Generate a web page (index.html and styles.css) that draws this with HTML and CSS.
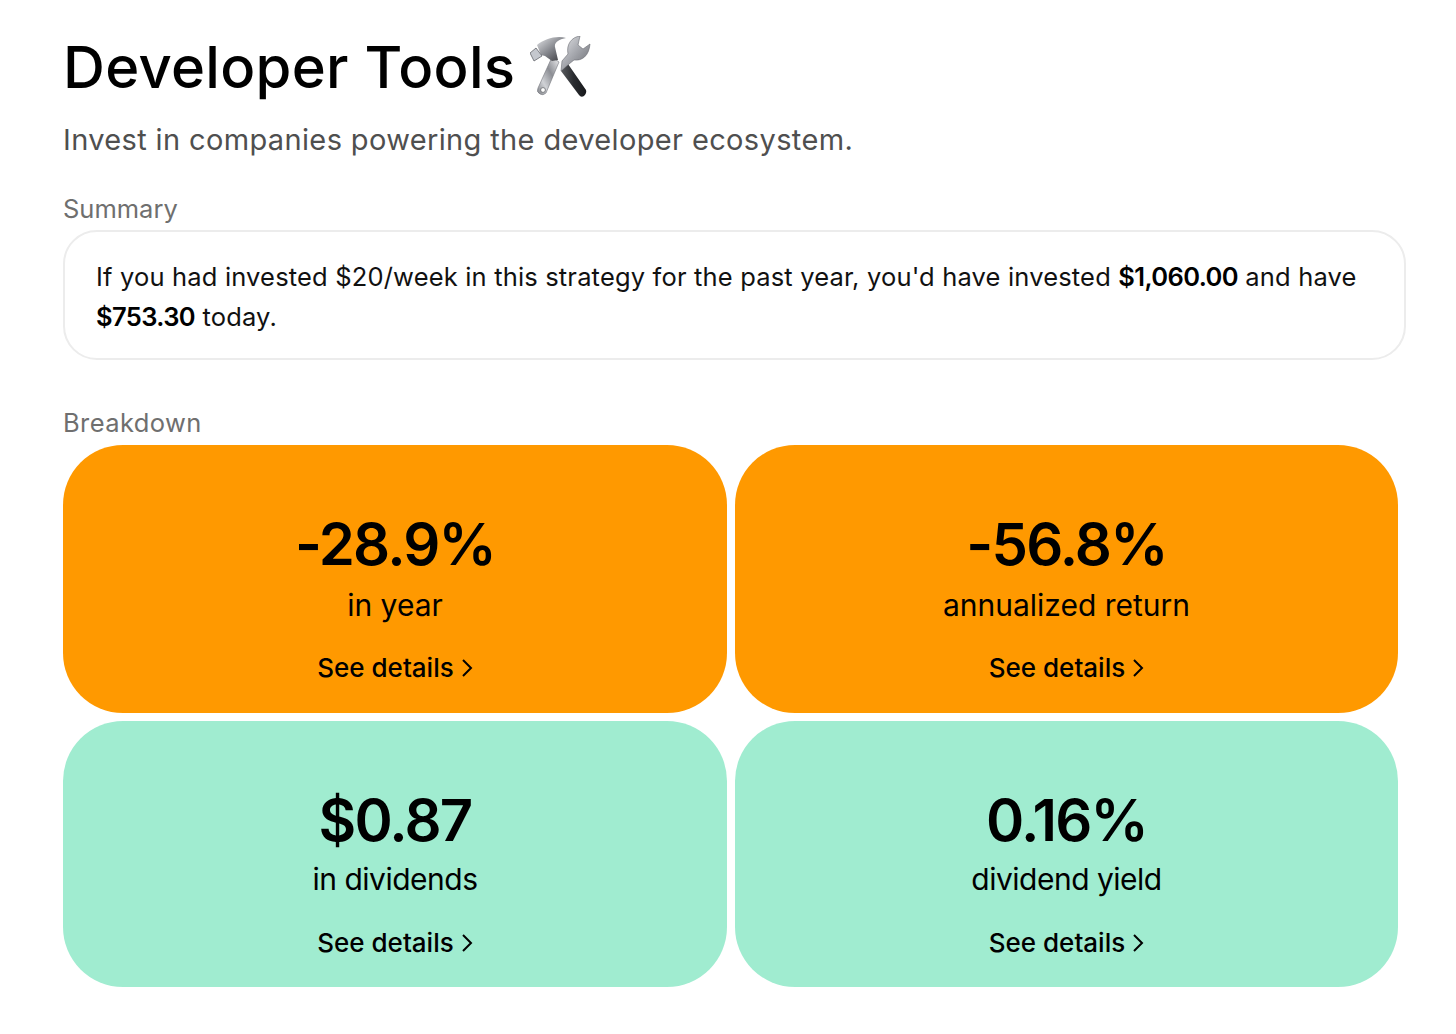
FILE: index.html
```html
<!DOCTYPE html>
<html lang="en">
<head>
<meta charset="utf-8">
<title>Developer Tools</title>
<link rel="stylesheet" href="styles.css">
</head>
<body>
<main class="page">
  <h1 class="title">Developer Tools
    <svg class="tools" viewBox="-1 0 62 62" aria-hidden="true">
      <defs>
        <linearGradient id="steel" x1="0" y1="0" x2="1" y2="1">
          <stop offset="0" stop-color="#e4e5e8"/><stop offset=".45" stop-color="#a9abb1"/><stop offset="1" stop-color="#66686e"/>
        </linearGradient>
        <linearGradient id="shaft" x1="1" y1="0" x2="0" y2="1">
          <stop offset="0" stop-color="#f2f2f3"/><stop offset=".4" stop-color="#8c8e94"/><stop offset=".7" stop-color="#d0d2d6"/><stop offset="1" stop-color="#7d7f85"/>
        </linearGradient>
        <linearGradient id="head" x1="0" y1="0" x2="1" y2="1">
          <stop offset="0" stop-color="#e2e3e6"/><stop offset=".5" stop-color="#85878d"/><stop offset="1" stop-color="#2f3034"/>
        </linearGradient>
        <linearGradient id="grip" x1="0" y1="0" x2="1" y2="0">
          <stop offset="0" stop-color="#5a5c60"/><stop offset=".5" stop-color="#2a2c30"/><stop offset="1" stop-color="#17181b"/>
        </linearGradient>
      </defs>
      <path d="M30 35 L37 28 L55 54 Q56 57 53 60 Q50 62 48 59 Z" fill="url(#grip)"/>
      <path d="M30 35 L38 28 L43 24 C51 25 58 20 59 8 L52 13 L47 9 L49 0 C41 1 35 8 37 18 L31 25 Z" fill="url(#steel)" stroke="#6a6c72" stroke-width=".6"/>
      <path d="M21 21 L28 26 L15 57 Q12 60 9 58 Q5 56 7 52 Z" fill="url(#shaft)" stroke="#74767c" stroke-width=".6"/>
      <circle cx="12" cy="54" r="2.4" fill="#fff" stroke="#55575c" stroke-width=".7"/>
      <path d="M6 9 C13 3 26 -1 35 2 C29 3 23 6 24 11 L27 24 L21 25 L14 20 L10 19 Z" fill="url(#head)"/>
      <path d="M-1 17 L5 12 L11 20 L3 25 Z" fill="#c5c8ce" stroke="#54565c" stroke-width=".7"/>
    </svg>
  </h1>
  <p class="subtitle">Invest in companies powering the developer ecosystem.</p>

  <h2 class="label label-summary">Summary</h2>
  <p class="summary">If you had invested $20/week in this strategy for the past year, you'd have invested <b>$1,060.00</b> and have <b>$753.30</b> today.</p>

  <h2 class="label label-breakdown">Breakdown</h2>
  <section class="grid">
    <article class="card orange">
      <div class="value">-28.9%</div>
      <div class="caption">in year</div>
      <a class="details">See details <svg class="chev" viewBox="0 0 12 20"><path d="M2 2l8 8-8 8"/></svg></a>
    </article>
    <article class="card orange">
      <div class="value">-56.8%</div>
      <div class="caption">annualized return</div>
      <a class="details">See details <svg class="chev" viewBox="0 0 12 20"><path d="M2 2l8 8-8 8"/></svg></a>
    </article>
    <article class="card mint">
      <div class="value">$0.87</div>
      <div class="caption">in dividends</div>
      <a class="details">See details <svg class="chev" viewBox="0 0 12 20"><path d="M2 2l8 8-8 8"/></svg></a>
    </article>
    <article class="card mint">
      <div class="value">0.16%</div>
      <div class="caption">dividend yield</div>
      <a class="details">See details <svg class="chev" viewBox="0 0 12 20"><path d="M2 2l8 8-8 8"/></svg></a>
    </article>
  </section>
</main>
</body>
</html>
```
FILE: styles.css
```css
* { box-sizing: border-box; }
html, body { margin: 0; background: #fff; }
body { font-family: Inter, "Noto Sans", "Liberation Sans", sans-serif; color: #000; }
.page { padding: 29px 50px 0 63px; width: 1456px; }
.title { margin: 0; font-size: 58px; line-height: 76px; height: 76px; font-weight: 500; letter-spacing: .3px; display: flex; align-items: center; gap: 15px; }
.tools { width: 62px; height: 62px; flex: none; }
.subtitle { margin: 16px 0 0; font-size: 29px; line-height: 38px; color: #4f4f4f; letter-spacing: .36px; }
.label { margin: 0; font-size: 25.5px; line-height: 34px; font-weight: 400; color: #6f6f6f; }
.label-summary { margin-top: 33px; }
.summary { margin: 4px 0 0; width: 1343px; height: 130px; padding: 25px 31px; border: 2px solid #ececec; border-radius: 34px; font-size: 25.5px; line-height: 40px; letter-spacing: .17px; color: #111; }
.summary b { font-weight: 600; color: #000; letter-spacing: -.6px; }
.label-breakdown { margin-top: 46px; letter-spacing: .4px; }
.grid { margin-top: 5px; width: 1335px; display: grid; grid-template-columns: 664px 663px; grid-template-rows: 268px 266px; gap: 8px; }
.card { border-radius: 60px; display: flex; flex-direction: column; align-items: center; padding-top: 62px; }
.orange { background: #ff9900; }
.mint { background: #a0ecd0; }
.value { font-size: 58px; line-height: 74px; font-weight: 600; letter-spacing: -1.8px; }
.caption { font-size: 30px; line-height: 40px; margin-top: 4px; }
.details { font-size: 26px; line-height: 34px; font-weight: 500; margin-top: 26px; display: flex; align-items: center; gap: 7px; }
.mint .caption { margin-top: 2px; letter-spacing: -.5px; }
.mint .details { margin-top: 27px; }
.chev { width: 12px; height: 20px; fill: none; stroke: #000; stroke-width: 2; }
```
